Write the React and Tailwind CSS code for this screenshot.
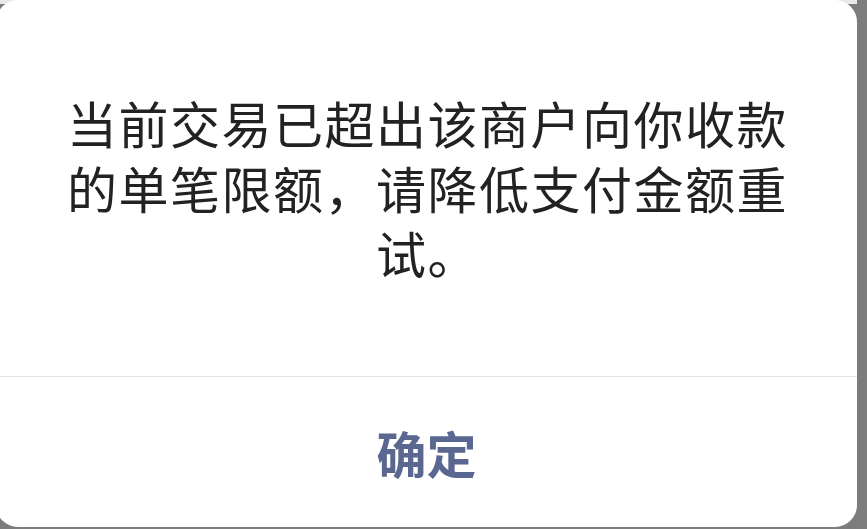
// Payment limit alert: message body, hairline divider, single confirm action.
const CJK = "font-['Noto_Sans_CJK_SC','Noto_Sans',sans-serif]";

export default function App() {
  return (
    <div className="w-[867px] h-[529px] bg-[#7c7c7c] overflow-hidden flex flex-col">
      <div className="h-[4px] w-[857px] shrink-0 bg-[#e9e9ea]" />
      <div className="-mt-[4px] -ml-[4px] w-[861px] h-[527px] shrink-0 bg-white rounded-[22px] flex flex-col">
        <div className="h-[376px] shrink-0 flex items-center justify-center pl-[70px] pr-[68px] pb-[2px]">
          <p
            className={`${CJK} text-[50px] leading-[65px] tracking-[1.5px] text-[#222222] text-center`}
          >
            当前交易已超出该商户向你收款的单笔限额，请降低支付金额重试。
          </p>
        </div>
        <div className="h-px bg-[#e4e4e4] ml-[4px]" />
        <button
          type="button"
          className={`${CJK} flex-1 flex items-center justify-center text-[50px] font-bold text-[#5a6790]`}
        >
          确定
        </button>
      </div>
    </div>
  );
}
